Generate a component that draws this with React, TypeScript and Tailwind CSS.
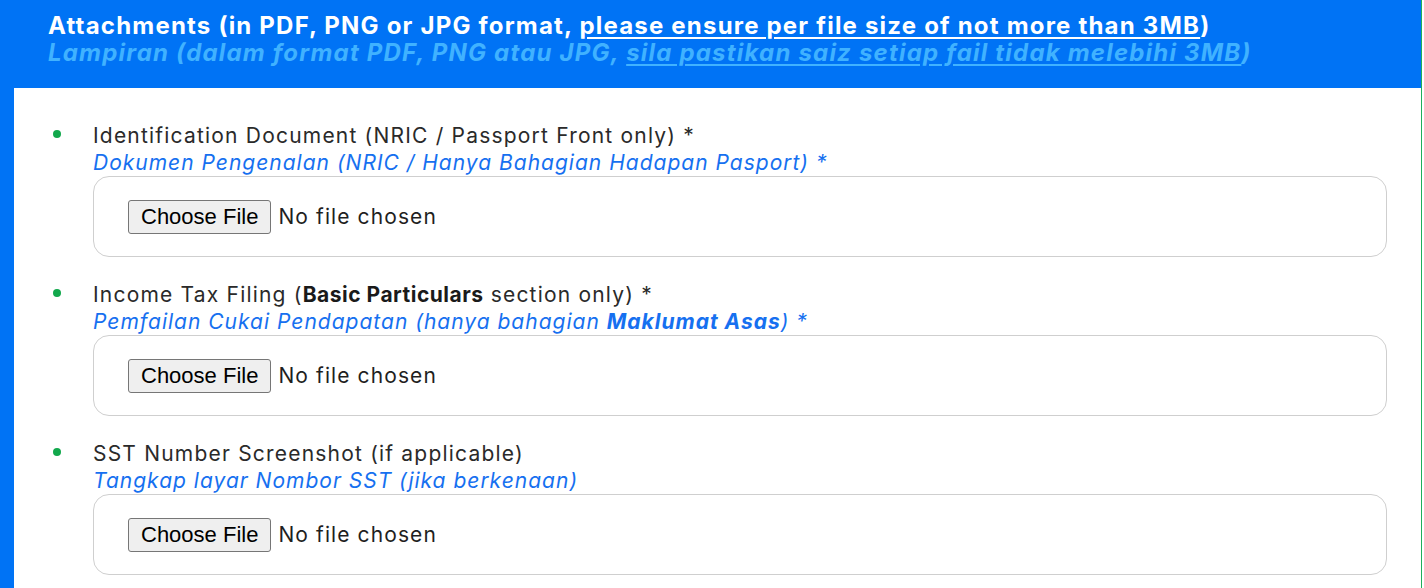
import React from "react";

const items = [
  {
    id: "ic",
    en: <>Identification Document (NRIC / Passport Front only) *</>,
    ms: <>Dokumen Pengenalan (NRIC / Hanya Bahagian Hadapan Pasport) *</>,
  },
  {
    id: "tax",
    en: (
      <>
        Income Tax Filing (
        <b className="font-bold tracking-[0.5px] text-[#1a1a1a]">Basic Particulars</b> section only) *
      </>
    ),
    ms: (
      <>
        Pemfailan Cukai Pendapatan (hanya bahagian <b className="font-bold">Maklumat Asas</b>) *
      </>
    ),
  },
  {
    id: "sst",
    en: <>SST Number Screenshot (if applicable)</>,
    ms: <>Tangkap layar Nombor SST (jika berkenaan)</>,
  },
];

function FileField({ id }: { id: string }) {
  return (
    <label
      htmlFor={id}
      className="flex h-[81px] items-center rounded-[16px] border border-[#cfcfcf] pl-[34px]"
    >
      <input id={id} type="file" accept=".pdf,.png,.jpg,.jpeg" className="hidden" />
      <span className="flex h-[34px] items-center rounded-[3px] border border-[#767676] bg-[#efefef] px-[12px] font-['Liberation_Sans',Arial,sans-serif] text-[22px] text-black">
        Choose File
      </span>
      <span className="ml-[7px] text-[21px] tracking-[1.1px] text-[#1f1f1f]">No file chosen</span>
    </label>
  );
}

export default function App() {
  return (
    <div className="min-h-screen bg-white font-['Inter','Noto_Sans',sans-serif]">
      <div className="w-[1422px] border-r border-[#1fae5b]">
        <div className="h-[88px] bg-[#0073f5] pl-[48px] pt-[12px] text-[24px] font-bold leading-[27px] tracking-[1.2px]">
          <p className="text-white">
            Attachments (in PDF, PNG or JPG format,{" "}
            <span className="underline underline-offset-[3px]">
              please ensure per file size of not more than 3MB
            </span>
            )
          </p>
          <p className="italic text-[#40b2ff]">
            Lampiran (dalam format PDF, PNG atau JPG,{" "}
            <span className="underline underline-offset-[3px]">
              sila pastikan saiz setiap fail tidak melebihi 3MB
            </span>
            )
          </p>
        </div>
        <div className="flex flex-col gap-[24px] border-l-[14px] border-[#0073f5] pb-[14px] pl-[39px] pr-[34px] pt-[122px] -mt-[88px]">
          {items.map((it) => (
            <div key={it.id} className="flex">
              <span className="mt-[8px] h-[8px] w-[8px] shrink-0 rounded-full bg-[#12a84c]" />
              <div className="ml-[32px] flex-1">
                <p className="text-[21px] leading-[27px] tracking-[1.2px] text-[#2a2a2a]">{it.en}</p>
                <p className="text-[21px] italic leading-[27px] tracking-[1px] text-[#1670f0]">{it.ms}</p>
                <FileField id={it.id} />
              </div>
            </div>
          ))}
        </div>
      </div>
    </div>
  );
}
